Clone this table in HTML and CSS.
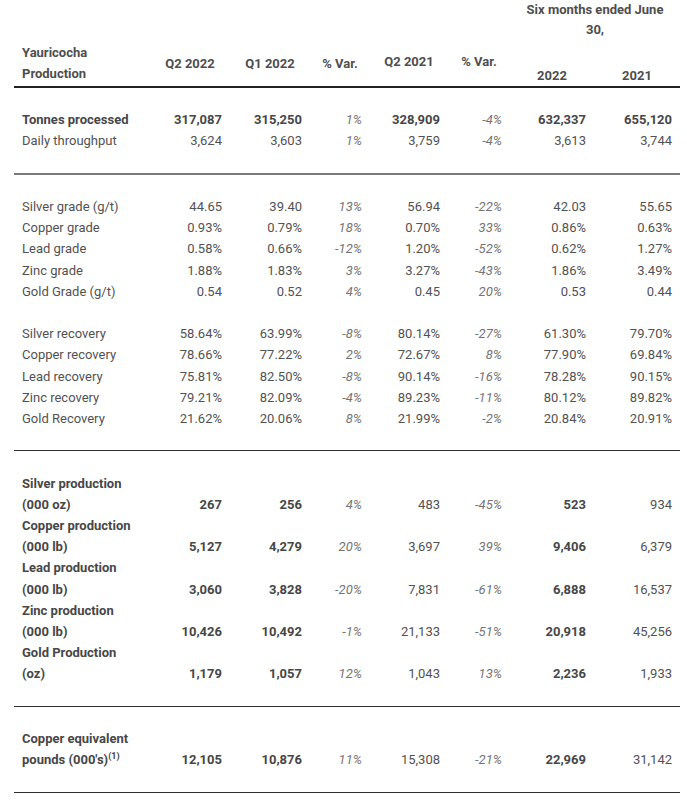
FILE: index.html
```html
<!DOCTYPE html>
<html>
<head>
<meta charset="utf-8">
<link rel="stylesheet" href="styles.css">
</head>
<body>
<table class="prod">
  <colgroup>
    <col class="c-label"><col class="c-q"><col class="c-q"><col class="c-v1"><col class="c-q21"><col class="c-v2"><col class="c-y22"><col class="c-y21">
  </colgroup>
  <thead>
    <tr class="h1">
      <th></th><th></th><th></th><th></th><th></th><th></th>
      <th colspan="2" class="six">Six months ended June 30,</th>
    </tr>
    <tr class="h2">
      <th class="lab">Yauricocha<br>Production</th>
      <th>Q2 2022</th>
      <th>Q1 2022</th>
      <th>% Var.</th>
      <th class="up">Q2 2021</th>
      <th class="up">% Var.</th>
      <th class="bot">2022</th>
      <th class="bot">2021</th>
    </tr>
  </thead>
  <tbody>
    <tr class="gap"><td colspan="8"></td></tr>
    <tr class="b"><td class="lab">Tonnes processed</td><td>317,087</td><td>315,250</td><td class="v">1%</td><td>328,909</td><td class="v">-4%</td><td>632,337</td><td>655,120</td></tr>
    <tr><td class="lab">Daily throughput</td><td>3,624</td><td>3,603</td><td class="v">1%</td><td>3,759</td><td class="v">-4%</td><td>3,613</td><td>3,744</td></tr>
    <tr class="gap rule light"><td colspan="8"></td></tr>

    <tr class="gap"><td colspan="8"></td></tr>
    <tr><td class="lab">Silver grade (g/t)</td><td>44.65</td><td>39.40</td><td class="v">13%</td><td>56.94</td><td class="v">-22%</td><td>42.03</td><td>55.65</td></tr>
    <tr><td class="lab">Copper grade</td><td>0.93%</td><td>0.79%</td><td class="v">18%</td><td>0.70%</td><td class="v">33%</td><td>0.86%</td><td>0.63%</td></tr>
    <tr><td class="lab">Lead grade</td><td>0.58%</td><td>0.66%</td><td class="v">-12%</td><td>1.20%</td><td class="v">-52%</td><td>0.62%</td><td>1.27%</td></tr>
    <tr><td class="lab">Zinc grade</td><td>1.88%</td><td>1.83%</td><td class="v">3%</td><td>3.27%</td><td class="v">-43%</td><td>1.86%</td><td>3.49%</td></tr>
    <tr><td class="lab">Gold Grade (g/t)</td><td>0.54</td><td>0.52</td><td class="v">4%</td><td>0.45</td><td class="v">20%</td><td>0.53</td><td>0.44</td></tr>
    <tr class="gap"><td colspan="8"></td></tr>
    <tr><td class="lab">Silver recovery</td><td>58.64%</td><td>63.99%</td><td class="v">-8%</td><td>80.14%</td><td class="v">-27%</td><td>61.30%</td><td>79.70%</td></tr>
    <tr><td class="lab">Copper recovery</td><td>78.66%</td><td>77.22%</td><td class="v">2%</td><td>72.67%</td><td class="v">8%</td><td>77.90%</td><td>69.84%</td></tr>
    <tr><td class="lab">Lead recovery</td><td>75.81%</td><td>82.50%</td><td class="v">-8%</td><td>90.14%</td><td class="v">-16%</td><td>78.28%</td><td>90.15%</td></tr>
    <tr><td class="lab">Zinc recovery</td><td>79.21%</td><td>82.09%</td><td class="v">-4%</td><td>89.23%</td><td class="v">-11%</td><td>80.12%</td><td>89.82%</td></tr>
    <tr><td class="lab">Gold Recovery</td><td>21.62%</td><td>20.06%</td><td class="v">8%</td><td>21.99%</td><td class="v">-2%</td><td>20.84%</td><td>20.91%</td></tr>
    <tr class="gap rule"><td colspan="8"></td></tr>

    <tr class="gap"><td colspan="8"></td></tr>
    <tr class="pr"><td class="lab">Silver production<br>(000 oz)</td><td class="s">267</td><td class="s">256</td><td class="v">4%</td><td>483</td><td class="v">-45%</td><td class="s">523</td><td>934</td></tr>
    <tr class="pr"><td class="lab">Copper production<br>(000 lb)</td><td class="s">5,127</td><td class="s">4,279</td><td class="v">20%</td><td>3,697</td><td class="v">39%</td><td class="s">9,406</td><td>6,379</td></tr>
    <tr class="pr"><td class="lab">Lead production<br>(000 lb)</td><td class="s">3,060</td><td class="s">3,828</td><td class="v">-20%</td><td>7,831</td><td class="v">-61%</td><td class="s">6,888</td><td>16,537</td></tr>
    <tr class="pr"><td class="lab">Zinc production<br>(000 lb)</td><td class="s">10,426</td><td class="s">10,492</td><td class="v">-1%</td><td>21,133</td><td class="v">-51%</td><td class="s">20,918</td><td>45,256</td></tr>
    <tr class="pr"><td class="lab">Gold Production<br>(oz)</td><td class="s">1,179</td><td class="s">1,057</td><td class="v">12%</td><td>1,043</td><td class="v">13%</td><td class="s">2,236</td><td>1,933</td></tr>
    <tr class="gap rule"><td colspan="8"></td></tr>

    <tr class="gap"><td colspan="8"></td></tr>
    <tr class="pr"><td class="lab">Copper equivalent<br>pounds (000's)<sup>(1)</sup></td><td class="s">12,105</td><td class="s">10,876</td><td class="v">11%</td><td>15,308</td><td class="v">-21%</td><td class="s">22,969</td><td>31,142</td></tr>
    <tr class="gap rule"><td colspan="8"></td></tr>
  </tbody>
</table>
</body>
</html>
```
FILE: styles.css
```css
html, body {
  margin: 0;
  padding: 0;
  background: #ffffff;
}

.prod {
  margin-left: 14px;
  width: 666px;
  table-layout: fixed;
  border-collapse: collapse;
  font-family: Roboto, "Noto Sans", Arial, sans-serif;
  font-size: 13px;
  line-height: 21.2px;
  color: #525252;
}

.c-label { width: 136px; }
.c-q { width: 80px; }
.c-v1 { width: 60px; }
.c-q21 { width: 78px; }
.c-v2 { width: 62px; }
.c-y22 { width: 84px; }
.c-y21 { width: 86px; }

.prod th,
.prod td {
  padding: 0 8px;
  white-space: nowrap;
}

.prod th {
  font-weight: 700;
  color: #4e4e4e;
  text-align: center;
  vertical-align: middle;
}

.h1 th {
  height: 40px;
  line-height: 20px;
  vertical-align: top;
}

.prod .six {
  white-space: normal;
  padding: 0 6px;
}

.h2 th {
  height: 42px;
  line-height: 21px;
  border-bottom: 2px solid #222222;
}

.h2 th.lab {
  text-align: left;
}

.h2 th.up {
  padding-bottom: 4px;
}

.h2 th.bot {
  vertical-align: bottom;
}

.prod td {
  text-align: right;
  vertical-align: bottom;
}

.prod td.lab {
  text-align: left;
}

.prod td.v {
  font-style: italic;
  color: #747474;
}

.b td {
  font-weight: 700;
  color: #474747;
}

.b td.v {
  font-weight: 400;
  color: #747474;
}

.pr td.lab,
.prod td.s {
  font-weight: 700;
  color: #474747;
}

.gap td {
  height: 21.2px;
  padding: 0;
}

.rule td {
  border-bottom: 1px solid #2e2e2e;
}

.rule.light td {
  border-bottom: 2px solid #7a7a7a;
}

sup {
  font-size: 9px;
  line-height: 0;
  vertical-align: 5px;
}
```
